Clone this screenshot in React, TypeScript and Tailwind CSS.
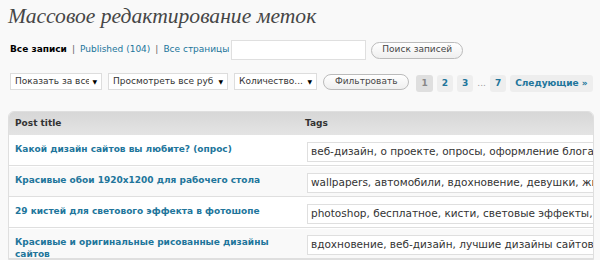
import React from "react";

const rows = [
  {
    title: "Какой дизайн сайтов вы любите? (опрос)",
    tags: "веб-дизайн, о проекте, опросы, оформление блога",
  },
  {
    title: "Красивые обои 1920x1200 для рабочего стола",
    tags: "wallpapers, автомобили, вдохновение, девушки, животные",
  },
  {
    title: "29 кистей для светового эффекта в фотошопе",
    tags: "photoshop, бесплатное, кисти, световые эффекты, фотошоп",
  },
  {
    title: "Красивые и оригинальные рисованные дизайны сайтов",
    tags: "вдохновение, веб-дизайн, лучшие дизайны сайтов, рисованные",
  },
];

function Select({ label, width }: { label: string; width: string }) {
  return (
    <div
      className={`${width} h-[17px] flex items-center bg-white border border-[#dddddd] pl-[4px] pr-[4px] text-[9px] text-[#333]`}
    >
      <span className="flex-1 min-w-0 whitespace-nowrap overflow-hidden">{label}</span>
      <span className="text-[6px] text-black ml-[3px]">▼</span>
    </div>
  );
}

function PageButton({ label, current }: { label: string; current?: boolean }) {
  return (
    <span
      className={
        current
          ? "h-[17px] px-[5px] flex items-center rounded-[3px] bg-[#dfdfdf] text-[#888] font-bold text-[9px]"
          : "h-[17px] px-[5px] flex items-center rounded-[3px] bg-[#eeeeee] text-[#21759b] font-bold text-[9px]"
      }
    >
      {label}
    </span>
  );
}

export default function App() {
  return (
    <div
      className="w-[600px] h-[260px] overflow-hidden bg-[#f9f9f9] text-[#333]"
      style={{ fontFamily: "'DejaVu Sans', Verdana, sans-serif" }}
    >
      <h2
        className="pl-2 pt-[3px] text-[21.6px] leading-[26px] italic text-[#464646]"
        style={{ fontFamily: "'Liberation Serif', Georgia, serif" }}
      >
        Массовое редактирование меток
      </h2>

      <div className="mt-[11px] pl-[10px] flex items-center text-[9px]">
        <span className="font-bold text-black">Все записи</span>
        <span className="mx-[5px] text-[#666]">|</span>
        <span className="text-[#21759b]">Published (104)</span>
        <span className="mx-[5px] text-[#666]">|</span>
        <span className="text-[#21759b]">Все страницы</span>
        <div className="ml-[2px] w-[135px] h-[20px] bg-white border border-[#dfdfdf]" />
        <button className="ml-[5px] h-[17px] px-[10px] rounded-full border border-[#bbbbbb] bg-gradient-to-b from-white to-[#efefef] text-[9px] text-[#464646]">
          Поиск записей
        </button>
      </div>

      <div className="mt-[11px] pl-[10px] flex items-center gap-[6px]">
        <Select label="Показать за все" width="w-[92px]" />
        <Select label="Просмотреть все руб" width="w-[120px]" />
        <Select label="Количество..." width="w-[83px]" />
        <button className="h-[16px] px-[11px] rounded-full border border-[#bbbbbb] bg-gradient-to-b from-white to-[#efefef] text-[9px] text-[#464646]">
          Фильтровать
        </button>
        <div className="ml-[1px] mt-[4px] flex items-center gap-[4px]">
          <PageButton label="1" current />
          <PageButton label="2" />
          <PageButton label="3" />
          <span className="text-[9px] text-[#999]">...</span>
          <PageButton label="7" />
          <PageButton label="Следующие »" />
        </div>
      </div>

      <div className="mt-[19px] ml-2 w-[586px] rounded-t-[6px] border border-[#dfdfdf] overflow-hidden bg-white">
        <div className="h-[23px] flex items-center bg-gradient-to-b from-[#d7d7d7] to-[#e4e4e4] text-[9px] font-bold text-[#333]">
          <div className="w-[289px] pl-[6px]">Post title</div>
          <div className="pl-[7px]">Tags</div>
        </div>
        {rows.map((r, i) => (
          <div
            key={i}
            className={`flex h-[31px] border-b border-[#dfdfdf] border-t border-t-white ${
              i % 2 === 1 ? "bg-[#f9f9f9]" : "bg-white"
            }`}
          >
            <div className="w-[289px] shrink-0 pl-[6px] pt-[7px] pr-2 text-[9px] leading-[12px] font-bold text-[#21759b]">
              {r.title}
            </div>
            <div className="pl-[9px] pt-[6px] min-w-0">
              <div className="w-[320px] h-[20px] flex items-center bg-white border border-[#dfdfdf] pl-[3px] text-[10.5px] text-[#333] whitespace-nowrap overflow-hidden">
                {r.tags}
              </div>
            </div>
          </div>
        ))}
      </div>
    </div>
  );
}
